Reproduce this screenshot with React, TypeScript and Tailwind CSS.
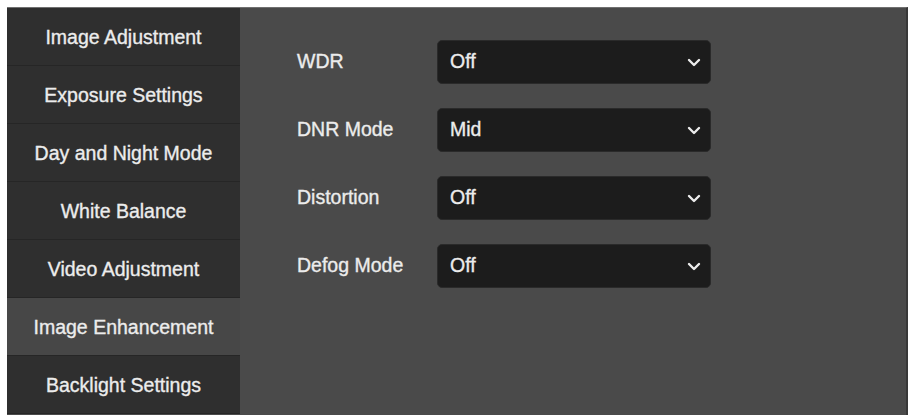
import React from "react";

const menu = [
  "Image Adjustment",
  "Exposure Settings",
  "Day and Night Mode",
  "White Balance",
  "Video Adjustment",
  "Image Enhancement",
  "Backlight Settings",
];

const fields = [
  { label: "WDR", value: "Off" },
  { label: "DNR Mode", value: "Mid" },
  { label: "Distortion", value: "Off" },
  { label: "Defog Mode", value: "Off" },
];

function Chevron() {
  return (
    <svg width="14" height="9" viewBox="0 0 14 9" fill="none" className="shrink-0">
      <path d="M2 2 L7 7 L12 2" stroke="#ececec" strokeWidth="2.4" strokeLinecap="round" strokeLinejoin="round" />
    </svg>
  );
}

const textCls = "text-[19.5px] text-[#ececec] [-webkit-text-stroke:0.35px_#ececec]";

export default function App() {
  return (
    <div
      className="w-[912px] h-[418px] bg-white pt-[7px] pl-[7px]"
      style={{ fontFamily: '"Liberation Sans", Arial, sans-serif' }}
    >
      <div className="flex w-[901px] h-[408px] border-t border-t-[#707070] border-r-2 border-r-[#383838] bg-[#4a4a4a]">
        <nav className="flex flex-col w-[233px] shrink-0">
          {menu.map((item) => {
            const active = item === "Image Enhancement";
            return (
              <div
                key={item}
                className={`h-[58px] pt-[3px] flex items-center justify-center border-b border-b-[#262626] ${textCls} ${
                  active ? "bg-[#474747]" : "bg-[#2f2f2f]"
                }`}
              >
                {item}
              </div>
            );
          })}
        </nav>
        <div className="flex flex-col gap-[24px] pt-[32px] pl-[57px]">
          {fields.map((f) => (
            <div key={f.label} className="flex items-center">
              <span className={`w-[140px] ${textCls}`}>{f.label}</span>
              <div
                className={`flex items-center justify-between w-[274px] h-[44px] rounded-[5px] bg-[#1c1c1c] border border-[#2a2a2a] pl-[12px] pr-[9px] ${textCls}`}
              >
                <span>{f.value}</span>
                <Chevron />
              </div>
            </div>
          ))}
        </div>
      </div>
    </div>
  );
}
